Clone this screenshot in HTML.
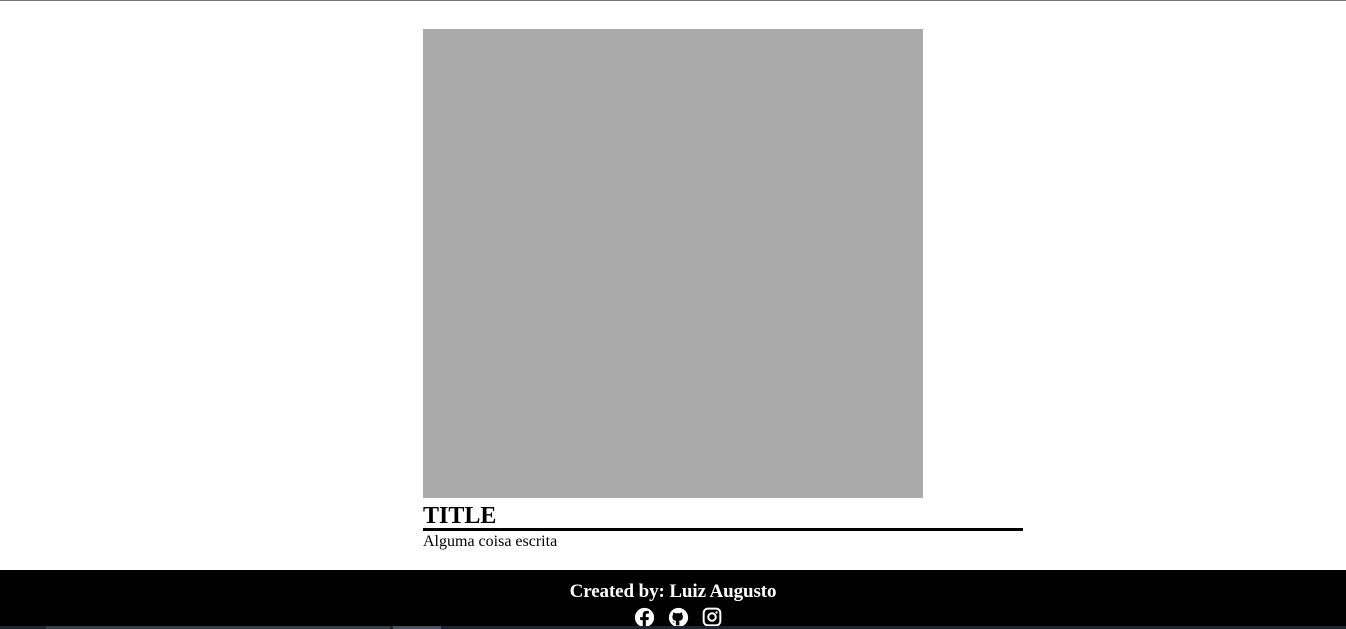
<!DOCTYPE html>
<html><head><style>
html,body{margin:0;padding:0;width:1346px;height:629px;overflow:hidden;background:#fff;font-family:"Liberation Serif",serif;}
.top{position:absolute;left:0;top:0;width:1346px;height:1px;background:#777;}
.img{position:absolute;left:423px;top:29px;width:500px;height:469px;background:#aaa;}
.title{position:absolute;left:423px;top:502px;font-size:24px;font-weight:bold;line-height:28px;}
.line{position:absolute;left:423px;top:528px;width:600px;height:3px;background:#000;}
.txt{position:absolute;left:423px;top:532px;font-size:16px;line-height:19px;}
.foot{position:absolute;left:0;top:570px;width:1346px;height:59px;background:#000;color:#fff;}
.foot .c{position:absolute;left:0;width:1346px;top:11px;text-align:center;font-size:19px;font-weight:bold;line-height:22px;letter-spacing:-0.1px;}
.icons{position:absolute;top:37px;left:633px;}
.icons svg{position:absolute;top:0;}
.strip{position:absolute;left:0;top:626px;width:1346px;height:3px;background:#1c2530;}
.s1{position:absolute;left:46px;top:626px;width:344px;height:3px;background:#3a3f46;}
.s2{position:absolute;left:393px;top:626px;width:48px;height:3px;background:#4a5260;}
</style></head><body>
<div class="top"></div>
<div class="img"></div>
<div class="title">TITLE</div>
<div class="line"></div>
<div class="txt">Alguma coisa escrita</div>
<div class="foot">
<div class="c">Created by: Luiz Augusto</div>
<div class="icons">
<svg style="left:1px" width="21" height="21" viewBox="0 0 24 24"><circle cx="12" cy="12" r="11" fill="#fff"/><path d="M13.5 24V15h3l.5-3.5h-3.5V9.3c0-1 .3-1.7 1.7-1.7H17V4.5c-.3 0-1.4-.1-2.6-.1-2.6 0-4.4 1.6-4.4 4.5v2.6H7V15h3v9z" fill="#000"/></svg>
<svg style="left:35px" width="21" height="21" viewBox="0 0 24 24"><circle cx="12" cy="12" r="11" fill="#fff"/><path d="M9 21v-3c-3 .5-3.5-1.5-4-2 1 0 1.5 1 2 1.5.7.6 1.7.3 2 0 0-.8.3-1.3.6-1.6-2.7-.3-4.6-1.4-4.6-4.6 0-1 .3-1.8.9-2.400-.1-.3-.4-1.3.1-2.6 0 0 .8-.3 2.6 1a9 9 0 0 1 4.8 0c1.8-1.3 2.6-1 2.6-1 .5 1.3.2 2.3.1 2.6.6.6.9 1.4.9 2.4 0 3.2-1.9 4.3-4.6 4.6.4.3.6 1 .6 1.9V21z" fill="#000"/></svg>
<svg style="left:69px" width="20" height="20" viewBox="0 0 24 24"><rect x="2" y="2" width="20" height="20" rx="5" fill="none" stroke="#fff" stroke-width="2.4"/><circle cx="12" cy="12" r="4.5" fill="none" stroke="#fff" stroke-width="2.4"/><circle cx="17.5" cy="6.5" r="1.4" fill="#fff"/></svg>
</div>
</div>
<div class="strip"></div><div class="s1"></div><div class="s2"></div>
</body></html>
